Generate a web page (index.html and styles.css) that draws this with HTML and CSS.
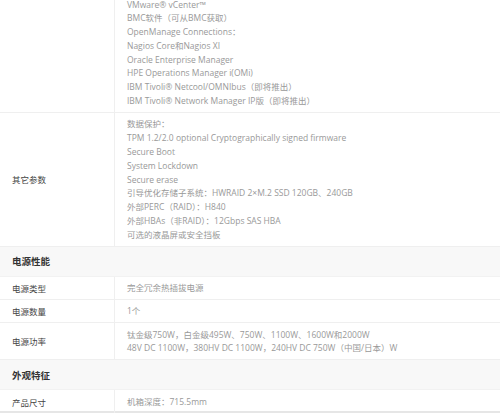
FILE: index.html
```html
<!DOCTYPE html>
<html lang="zh-CN">
<head>
<meta charset="utf-8">
<link rel="stylesheet" href="styles.css">
</head>
<body>
<div class="spec">
  <div class="row first">
    <div class="label"></div>
    <div class="value">
      <div>VMware® vCenter™</div>
      <div>BMC软件（可从BMC获取）</div>
      <div>OpenManage Connections：</div>
      <div>Nagios Core和Nagios XI</div>
      <div>Oracle Enterprise Manager</div>
      <div>HPE Operations Manager i(OMi)</div>
      <div>IBM Tivoli® Netcool/OMNIbus（即将推出）</div>
      <div>IBM Tivoli® Network Manager IP版（即将推出）</div>
    </div>
  </div>
  <div class="row">
    <div class="label">其它参数</div>
    <div class="value">
      <div>数据保护：</div>
      <div>TPM 1.2/2.0 optional Cryptographically signed firmware</div>
      <div>Secure Boot</div>
      <div>System Lockdown</div>
      <div>Secure erase</div>
      <div>引导优化存储子系统：HWRAID 2×M.2 SSD 120GB、240GB</div>
      <div>外部PERC（RAID）：H840</div>
      <div>外部HBAs（非RAID）：12Gbps SAS HBA</div>
      <div>可选的液晶屏或安全挡板</div>
    </div>
  </div>
  <div class="section">电源性能</div>
  <div class="row">
    <div class="label">电源类型</div>
    <div class="value"><div>完全冗余热插拔电源</div></div>
  </div>
  <div class="row">
    <div class="label">电源数量</div>
    <div class="value"><div>1个</div></div>
  </div>
  <div class="row">
    <div class="label">电源功率</div>
    <div class="value">
      <div>钛金级750W，白金级495W、750W、1100W、1600W和2000W</div>
      <div>48V DC 1100W，380HV DC 1100W，240HV DC 750W（中国/日本）W</div>
    </div>
  </div>
  <div class="section">外观特征</div>
  <div class="row last">
    <div class="label">产品尺寸</div>
    <div class="value"><div>机箱深度：715.5mm</div></div>
  </div>
  <div class="footer"></div>
</div>
</body>
</html>
```
FILE: styles.css
```css
html, body {
  margin: 0;
  padding: 0;
  background: #fff;
  overflow: hidden;
}
body {
  font-family: "Open Sans", "Noto Sans CJK SC", sans-serif;
  font-size: 8.5px;
  color: #999;
}
.spec {
  width: 500px;
}
.row {
  display: grid;
  grid-template-columns: 115px 1fr;
  border-bottom: 1px solid #efefef;
}
.row.first {
  margin-top: -7px;
}
.label {
  display: flex;
  align-items: center;
  padding-left: 12px;
  color: #444;
  border-right: 1px solid #efefef;
}
.value {
  padding: 4.5px 0 4px 12px;
  line-height: 13.8px;
  white-space: nowrap;
}
.section {
  height: 29px;
  display: flex;
  align-items: center;
  padding-left: 12px;
  background: #f8f8f8;
  border-bottom: 1px solid #f2f2f2;
  color: #333;
  font-weight: bold;
  font-size: 9.5px;
}
.row.last {
  height: 20.6px;
  border-bottom: none;
}
.row.last .value {
  padding-top: 5px;
}
.footer {
  height: 3px;
  background: #e6e6e6;
}
```
